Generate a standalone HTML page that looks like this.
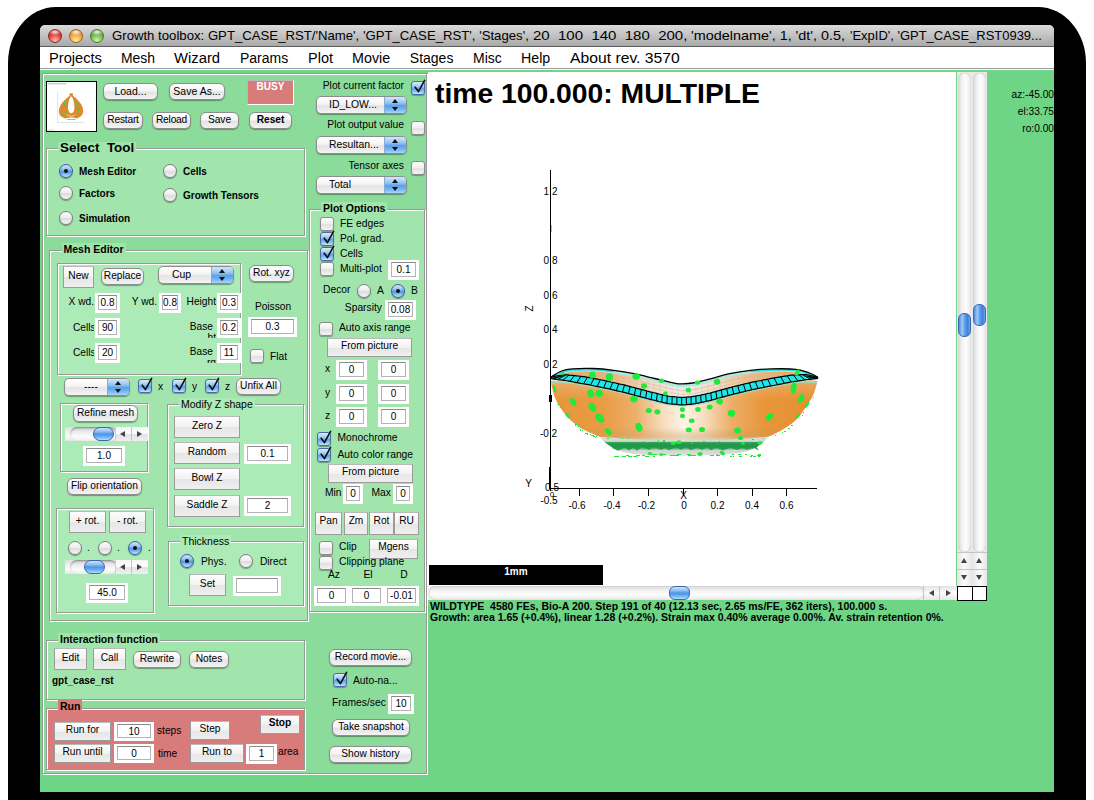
<!DOCTYPE html>
<html><head><meta charset="utf-8"><title>Growth toolbox</title>
<style>
html,body{margin:0;padding:0;background:#fff;}
body{width:1094px;height:800px;position:relative;overflow:hidden;font-family:"Liberation Sans",sans-serif;font-size:10px;color:#000;}
div,span{position:absolute;box-sizing:border-box;white-space:nowrap;}
#shadow{left:8px;top:7px;width:1078px;height:920px;background:#000;border-radius:48px / 56px;}
#win{left:40px;top:25px;width:1014px;height:767px;background:linear-gradient(#d6d6d6 0,#d6d6d6 10px,#6ed486 10px);overflow:hidden;border-radius:5px 5px 0 0;}
#title{left:0;top:0;width:1014px;height:22px;background:linear-gradient(#dadada,#c4c4c4 45%,#a9a9a9);border-bottom:1px solid #5e5e5e;border-radius:5px 5px 0 0;}
#menu{left:0;top:22px;width:1014px;height:22px;background:#fff;border-bottom:1px solid #9a9a9a;}
.tl{width:14px;height:14px;border-radius:7px;top:4px;}
.mi{top:2px;font-size:14px;line-height:18px;transform-origin:0 50%;}
/* everything below is positioned in page coords inside #ui (offset -40,-25) */
#ui{left:-40px;top:-25px;width:1094px;height:800px;}
.t{line-height:12px;font-size:10.2px;}
.b{font-weight:bold;font-size:10px;}
.r{text-align:right;}
.c{text-align:center;}
.panel{border:1px solid #989898;box-shadow:inset 1px 1px 0 #fff, 1px 1px 0 #fff;}
.btn{height:17px;border:1px solid #8d8d8d;border-radius:6px;background:linear-gradient(#ffffff,#f4f4f4 45%,#e4e4e4 55%,#f3f3f3);box-shadow:0 1px 1px rgba(0,0,0,.35);text-align:center;font-size:10.2px;line-height:14px;}
.sq{border:1px solid #9b9b9b;border-top-color:#b9b9b9;background:linear-gradient(#fdfdfd,#f2f2f2 50%,#e6e6e6 52%,#efefef);text-align:center;font-size:10.2px;line-height:14px;}
.ed{background:#fff;}
.ed i{position:absolute;left:3px;top:2px;right:3px;bottom:3px;border:1px solid #b3b3b3;border-top-color:#8a8a8a;font-style:normal;text-align:center;font-size:10px;overflow:hidden;display:flex;align-items:center;justify-content:center;line-height:10px;padding-top:1px;}
.cb{width:14px;height:14px;border:1px solid #8a8a8a;border-radius:3px;background:linear-gradient(#fff,#eee 50%,#e0e0e0 55%,#f4f4f4);box-shadow:0 1px 1px rgba(0,0,0,.3);}
.cb.on{border-color:#4a69a6;background:linear-gradient(#dcebfc,#9cc6f2 40%,#5fa2ea 55%,#86c0f6 78%,#c4e6fd);}
.cb.on svg{position:absolute;left:-1px;top:-5px;}
.rd{width:14px;height:14px;border:1px solid #7f7f7f;border-radius:8px;background:linear-gradient(#fdfdfd,#ececec 50%,#dcdcdc 55%,#f6f6f6);box-shadow:0 1px 1px rgba(0,0,0,.35);}
.rd.on{border-color:#3d5c9c;background:linear-gradient(#d6e6fa,#8fbdf0 40%,#4f97e6 55%,#7fbdf6 78%,#c4e8fe);}
.rd.on:after{content:"";position:absolute;left:4px;top:4px;width:4px;height:4px;border-radius:3px;background:#111;}
.pop{height:17px;border:1px solid #8d8d8d;border-radius:5px;background:linear-gradient(#ffffff,#f4f4f4 45%,#e4e4e4 55%,#f3f3f3);box-shadow:0 1px 1px rgba(0,0,0,.35);font-size:10.4px;line-height:15px;overflow:hidden;}
.pop b{position:absolute;right:0;top:0;width:21px;height:17px;background:linear-gradient(#d3e6fa,#97c3f1 35%,#5a9fea 52%,#79b9f4 75%,#b7defc);border-left:1px solid #86a9d8;}
.pop b:before{content:"";position:absolute;left:7px;top:2px;border:3px solid transparent;border-top:0;border-bottom:4px solid #111;}
.pop b:after{content:"";position:absolute;left:7px;top:10px;border:3px solid transparent;border-bottom:0;border-top:4px solid #111;}
</style></head><body>
<div id="shadow"></div>
<div id="win">
 <div id="title">
  <div class="tl" style="left:8px;background:radial-gradient(ellipse 55% 30% at 50% 16%,rgba(255,255,255,.9),rgba(255,255,255,0)),radial-gradient(circle at 50% 88%,#ffc0b8,#e63a32 55%,#a01a18);border:1px solid #8a2a26"></div>
  <div class="tl" style="left:29px;background:radial-gradient(ellipse 55% 30% at 50% 16%,rgba(255,255,255,.9),rgba(255,255,255,0)),radial-gradient(circle at 50% 88%,#fff0a0,#f2a038 55%,#c06a14);border:1px solid #98602a"></div>
  <div class="tl" style="left:50px;background:radial-gradient(ellipse 55% 30% at 50% 16%,rgba(255,255,255,.9),rgba(255,255,255,0)),radial-gradient(circle at 50% 88%,#d8f4a8,#6cb448 55%,#3a8224);border:1px solid #4a7a34"></div>
  <span style="left:72.4px;top:2px;font-size:13px;line-height:18px;transform-origin:0 50%;white-space:pre;transform:scaleX(1.0129);">Growth toolbox: GPT_CASE_RST/'Name', 'GPT_CASE_RST', 'Stages', </span><span style="left:492.9px;top:2px;font-size:13px;line-height:18px;transform-origin:0 50%;white-space:pre;transform:scaleX(1.1541);">20  100  140  180  200, </span><span style="left:651.4px;top:2px;font-size:13px;line-height:18px;transform-origin:0 50%;white-space:pre;transform:scaleX(1.1063);">'modelname', 1, 'dt', 0.5, </span><span style="left:809.5px;top:2px;font-size:13px;line-height:18px;transform-origin:0 50%;white-space:pre;transform:scaleX(0.9973);">'ExpID', 'GPT_CASE_RST0939...</span>
 </div>
 <div id="menu">
  <span class="mi" style="left:8.7px;transform:scaleX(1.046)">Projects</span><span class="mi" style="left:81.1px;transform:scaleX(0.996)">Mesh</span><span class="mi" style="left:134.0px;transform:scaleX(1.058)">Wizard</span><span class="mi" style="left:200.1px;transform:scaleX(0.999)">Params</span><span class="mi" style="left:267.9px;transform:scaleX(1.036)">Plot</span><span class="mi" style="left:312.1px;transform:scaleX(1.022)">Movie</span><span class="mi" style="left:369.8px;transform:scaleX(1.000)">Stages</span><span class="mi" style="left:433.1px;transform:scaleX(0.997)">Misc</span><span class="mi" style="left:480.8px;transform:scaleX(1.014)">Help</span><span class="mi" style="left:529.6px;transform:scaleX(1.122)">About rev. 3570</span>
 </div>
 <div id="ui"><div style="left:40px;top:69px;width:1014px;height:1px;background:#fff"></div>
 <div class="panel" style="left:42px;top:73px;width:385px;height:701px;background:#8bdb9b;"></div>
<div style="left:46px;top:81px;width:51px;height:51px;background:#fff;border:1px solid #000;"></div>
<svg style="position:absolute;left:0;top:0" width="110" height="140" viewBox="0 0 110 140"><path d="M57.6 92V122.5H84" stroke="#d9d9d9" stroke-width="0.7" fill="none"/><rect x="47.5" y="83" width="19" height="1.4" fill="#bdbdbd" opacity="0.8"/><rect x="47.5" y="129.6" width="7" height="0.8" fill="#cfcfcf"/><path d="M69.6 93.3 L73 93.3 L72.8 95.4 C76 98 83.4 104 83.2 111 C83 116 79 118.4 75.5 118 C73 117.8 71.8 117.6 71 117.6 C70 117.6 68.8 117.9 66.5 118 C62.5 118.3 58.8 116 58.9 111 C59 104 66.5 98 69.8 95.4Z" fill="#dc8a2c"/><path d="M71.2 96.3 C69 98.5 67.8 104 68 108 C68.2 111.5 69.6 113.2 71.2 113.2 C72.8 113.2 74.2 111.5 74.4 108 C74.6 104 73.4 98.5 71.2 96.3Z" fill="#fff"/><path d="M66 113.5 C68 116.5 74.4 116.5 76.4 113.5 C76 117.5 66.4 117.5 66 113.5Z" fill="#f6dcc0"/><path d="M63.6 118 C67 119.6 75.6 119.6 79 118 C76.5 120.4 66 120.4 63.6 118Z" fill="#2fb24f"/><g fill="#2fd84a"><circle cx="64.5" cy="102.5" r="0.9"/><circle cx="64.3" cy="105.4" r="0.9"/><circle cx="77.2" cy="103.5" r="1.2"/><circle cx="77.8" cy="107.3" r="1"/><circle cx="78.4" cy="110" r="0.9"/><circle cx="62.8" cy="115" r="0.9"/><circle cx="66" cy="112.4" r="0.8"/><circle cx="76" cy="115.6" r="0.9"/><circle cx="68" cy="99" r="0.6"/></g></svg>
<div class="btn" style="left:103px;top:82.5px;width:55px;height:17px;font-size:10.5px;">Load...</div>
<div class="btn" style="left:169px;top:82.5px;width:56px;height:17px;font-size:10.5px;">Save As...</div>
<div style="left:247px;top:80px;width:47px;height:25px;background:#d87b7b;border:1px solid #fff;border-top-color:#b9b9b9;border-left-color:#b9b9b9;"></div>
<span class="t b c" style="left:247px;top:81px;width:47px;color:#fff;">BUSY</span>
<div class="btn" style="left:103px;top:111.5px;width:40px;height:17px;letter-spacing:-0.2px;">Restart</div>
<div class="btn" style="left:152px;top:111.5px;width:39px;height:17px;letter-spacing:-0.2px;">Reload</div>
<div class="btn" style="left:200px;top:111.5px;width:39px;height:17px;">Save</div>
<div class="btn b" style="left:249px;top:111.5px;width:43px;height:17px;">Reset</div>
<div class="panel" style="left:46px;top:148px;width:259px;height:88px;background:#a1e5ad;"></div>
<span class="t b" style="left:58px;top:141.5px;background:#a1e5ad;padding:0 2px;font-size:13.4px;">Select&nbsp; Tool</span>
<div class="rd on" style="left:59px;top:164px"></div>
<span class="t b" style="left:79px;top:166px;">Mesh Editor</span>
<div class="rd" style="left:59px;top:186px"></div>
<span class="t b" style="left:79px;top:188px;">Factors</span>
<div class="rd" style="left:59px;top:211px"></div>
<span class="t b" style="left:79px;top:213px;">Simulation</span>
<div class="rd" style="left:163px;top:164px"></div>
<span class="t b" style="left:183px;top:166px;">Cells</span>
<div class="rd" style="left:163px;top:188px"></div>
<span class="t b" style="left:183px;top:190px;">Growth Tensors</span>
<div class="panel" style="left:49px;top:250px;width:259px;height:371px;background:#a1e5ad;"></div>
<span class="t b" style="left:61.5px;top:242.5px;background:#a1e5ad;padding:0 2px;font-size:10.5px;">Mesh Editor</span>
<div class="panel" style="left:57px;top:263px;width:184px;height:112px;background:#acebb8;"></div>
<div class="sq" style="left:63px;top:266px;width:31px;height:22px;line-height:17px;">New</div>
<div class="btn" style="left:101px;top:268px;width:43px;height:17px;">Replace</div>
<div class="pop" style="left:158px;top:266px;width:76px;height:18px;padding-left:13px">Cup<b></b></div>
<div class="btn" style="left:249px;top:265px;width:45px;height:17px;">Rot. xyz</div>
<span class="t r" style="left:58px;top:296px;width:36px;">X wd.</span>
<div class="ed" style="left:95px;top:293px;width:25px;height:20px"><i>0.8</i></div>
<span class="t r" style="left:124px;top:296px;width:33px;">Y wd.</span>
<div class="ed" style="left:159px;top:293px;width:22px;height:20px"><i>0.8</i></div>
<span class="t r" style="left:180px;top:296px;width:36px;overflow:hidden;">Height</span>
<div class="ed" style="left:217px;top:293px;width:24px;height:20px"><i>0.3</i></div>
<span class="t" style="left:73px;top:321.5px;width:21px;overflow:hidden;">Cells</span>
<div class="ed" style="left:95px;top:318px;width:25px;height:20px"><i>90</i></div>
<span class="t" style="left:73px;top:346.5px;width:21px;overflow:hidden;">Cells</span>
<div class="ed" style="left:95px;top:343px;width:25px;height:20px"><i>20</i></div>
<span class="t r" style="left:180px;top:321px;width:33px;">Base</span>
<span class="t r" style="left:180px;top:332px;width:36px;height:6px;overflow:hidden;">ht</span>
<div class="ed" style="left:217px;top:318px;width:24px;height:20px"><i>0.2</i></div>
<span class="t r" style="left:180px;top:346px;width:33px;">Base</span>
<span class="t r" style="left:180px;top:357px;width:36px;height:6px;overflow:hidden;">rg</span>
<div class="ed" style="left:217px;top:343px;width:24px;height:20px"><i>11</i></div>
<span class="t c" style="left:248px;top:300.5px;width:50px;">Poisson</span>
<div class="ed" style="left:248px;top:317px;width:49px;height:20px"><i>0.3</i></div>
<div class="cb" style="left:250px;top:349px"></div>
<span class="t" style="left:270px;top:351px;">Flat</span>
<div class="pop" style="left:64px;top:378px;width:66px;height:18px;padding-left:19px">----<b></b></div>
<div class="cb on" style="left:138px;top:379px"><svg width="18" height="18" viewBox="0 0 18 18"><path d="M4.2 10.2 L7.4 14.6 L13.6 3.4" fill="none" stroke="#111" stroke-width="1.65" stroke-linecap="round" stroke-linejoin="round"/></svg></div>
<span class="t" style="left:158px;top:381px;">x</span>
<div class="cb on" style="left:172px;top:379px"><svg width="18" height="18" viewBox="0 0 18 18"><path d="M4.2 10.2 L7.4 14.6 L13.6 3.4" fill="none" stroke="#111" stroke-width="1.65" stroke-linecap="round" stroke-linejoin="round"/></svg></div>
<span class="t" style="left:192px;top:381px;">y</span>
<div class="cb on" style="left:205px;top:379px"><svg width="18" height="18" viewBox="0 0 18 18"><path d="M4.2 10.2 L7.4 14.6 L13.6 3.4" fill="none" stroke="#111" stroke-width="1.65" stroke-linecap="round" stroke-linejoin="round"/></svg></div>
<span class="t" style="left:225px;top:381px;">z</span>
<div class="btn" style="left:236px;top:378px;width:45px;height:17px;">Unfix All</div>
<div class="panel" style="left:60px;top:403px;width:88px;height:69px;background:#acebb8;"></div>
<div class="btn" style="left:73px;top:405px;width:65px;height:17px;">Refine mesh</div>
<div class="ed" style="left:83px;top:446px;width:42px;height:20px"><i>1.0</i></div>
<div class="btn" style="left:67px;top:477.5px;width:75px;height:17px;">Flip orientation</div>
<div class="panel" style="left:56px;top:508px;width:98px;height:105px;background:#acebb8;"></div>
<div class="sq" style="left:69px;top:511px;width:37px;height:22px;line-height:17px;">+ rot.</div>
<div class="sq" style="left:109px;top:511px;width:37px;height:22px;line-height:17px;">- rot.</div>
<div class="rd" style="left:68px;top:540.5px"></div>
<span class="t" style="left:87px;top:541.5px;">.</span>
<div class="rd" style="left:98px;top:540.5px"></div>
<span class="t" style="left:117px;top:541.5px;">.</span>
<div class="rd on" style="left:128px;top:540.5px"></div>
<span class="t" style="left:148px;top:541.5px;">.</span>
<div class="ed" style="left:86px;top:583px;width:42px;height:20px"><i>45.0</i></div>
<div class="panel" style="left:167px;top:404px;width:137px;height:123px;background:#acebb8;"></div>
<span class="t" style="left:179px;top:397.5px;background:#acebb8;padding:0 2px;font-size:10.5px;">Modify Z shape</span>
<div class="sq" style="left:174px;top:416px;width:66px;height:22px;line-height:17px;">Zero Z</div>
<div class="sq" style="left:174px;top:442px;width:66px;height:22px;line-height:17px;">Random</div>
<div class="ed" style="left:244px;top:444px;width:47px;height:20px"><i>0.1</i></div>
<div class="sq" style="left:174px;top:468px;width:66px;height:22px;line-height:17px;">Bowl Z</div>
<div class="sq" style="left:174px;top:495px;width:66px;height:22px;line-height:17px;">Saddle Z</div>
<div class="ed" style="left:244px;top:496px;width:47px;height:20px"><i>2</i></div>
<div class="panel" style="left:168px;top:541px;width:136px;height:65px;background:#acebb8;"></div>
<span class="t" style="left:180px;top:534.5px;background:#acebb8;padding:0 2px;font-size:10.5px;">Thickness</span>
<div class="rd on" style="left:180px;top:554px"></div>
<span class="t" style="left:201px;top:556px;">Phys.</span>
<div class="rd" style="left:239px;top:554px"></div>
<span class="t" style="left:260px;top:556px;">Direct</span>
<div class="sq" style="left:189px;top:574px;width:37px;height:22px;line-height:17px;">Set</div>
<div class="ed" style="left:233px;top:576px;width:48px;height:20px"><i></i></div>
<div class="panel" style="left:46px;top:640px;width:259px;height:60px;background:#a1e5ad;"></div>
<span class="t b" style="left:58px;top:632.5px;background:#a1e5ad;padding:0 2px;font-size:10.5px;">Interaction function</span>
<div class="sq" style="left:54px;top:648px;width:33px;height:22px;line-height:17px;">Edit</div>
<div class="sq" style="left:93px;top:648px;width:33px;height:22px;line-height:17px;">Call</div>
<div class="btn" style="left:133px;top:651px;width:48px;height:17px;">Rewrite</div>
<div class="btn" style="left:189px;top:651px;width:40px;height:17px;">Notes</div>
<span class="t b" style="left:52px;top:675px;">gpt_case_rst</span>
<div class="panel" style="left:46px;top:708px;width:259px;height:62px;background:#d87b7b;"></div>
<span class="t b" style="left:58px;top:700px;background:#d87b7b;padding:0 2px;font-size:10.5px;">Run</span>
<div class="sq" style="left:54px;top:722px;width:57px;height:19px;line-height:14px;">Run for</div>
<div class="ed" style="left:114px;top:722px;width:40px;height:19px"><i>10</i></div>
<span class="t" style="left:157px;top:725px;">steps</span>
<div class="sq" style="left:54px;top:744px;width:57px;height:19px;line-height:14px;">Run until</div>
<div class="ed" style="left:114px;top:744px;width:40px;height:19px"><i>0</i></div>
<span class="t" style="left:158px;top:748px;">time</span>
<div class="sq" style="left:190px;top:721px;width:40px;height:19px;line-height:14px;">Step</div>
<div class="sq b" style="left:260px;top:715px;width:40px;height:19px;line-height:14px;">Stop</div>
<div class="sq" style="left:190px;top:744px;width:54px;height:19px;line-height:14px;">Run to</div>
<div class="ed" style="left:246px;top:744px;width:31px;height:20px"><i>1</i></div>
<span class="t" style="left:278px;top:746px;">area</span>
<div style="left:65px;top:427px;width:83px;height:14px;background:linear-gradient(#dcdcdc,#f3f3f3 40%,#fafafa 70%,#e4e4e4);"></div>
<div style="left:70px;top:427px;width:47px;height:14px;background:linear-gradient(#c9c9c9,#e9e9e9 30%,#fbfbfb 65%,#ededed);border-radius:7px;box-shadow:inset 0 1px 2px rgba(0,0,0,.35);"></div>
<div style="left:93px;top:427px;width:21px;height:14px;background:linear-gradient(#cfe4fb,#8fbff2 30%,#4d94e6 52%,#6db2f4 75%,#b9e0fd);border:1px solid #3a66b0;border-radius:7px;"></div>
<div style="left:115px;top:427px;width:16px;height:14px;background:linear-gradient(#f6f6f6,#fdfdfd 45%,#e2e2e2 55%,#f0f0f0);border-left:1px solid #d0d0d0;"></div>
<div style="left:131px;top:427px;width:17px;height:14px;background:linear-gradient(#f6f6f6,#fdfdfd 45%,#e2e2e2 55%,#f0f0f0);border-left:1px solid #c4c4c4;"></div>
<div style="left:120px;top:431px;width:0px;height:0px;border:3.2px solid transparent;border-left:0;border-right:5.5px solid #444;"></div>
<div style="left:137px;top:431px;width:0px;height:0px;border:3.2px solid transparent;border-right:0;border-left:5.5px solid #444;"></div>
<div style="left:65px;top:560px;width:83px;height:14px;background:linear-gradient(#dcdcdc,#f3f3f3 40%,#fafafa 70%,#e4e4e4);"></div>
<div style="left:70px;top:560px;width:47px;height:14px;background:linear-gradient(#c9c9c9,#e9e9e9 30%,#fbfbfb 65%,#ededed);border-radius:7px;box-shadow:inset 0 1px 2px rgba(0,0,0,.35);"></div>
<div style="left:84px;top:560px;width:21px;height:14px;background:linear-gradient(#cfe4fb,#8fbff2 30%,#4d94e6 52%,#6db2f4 75%,#b9e0fd);border:1px solid #3a66b0;border-radius:7px;"></div>
<div style="left:115px;top:560px;width:16px;height:14px;background:linear-gradient(#f6f6f6,#fdfdfd 45%,#e2e2e2 55%,#f0f0f0);border-left:1px solid #d0d0d0;"></div>
<div style="left:131px;top:560px;width:17px;height:14px;background:linear-gradient(#f6f6f6,#fdfdfd 45%,#e2e2e2 55%,#f0f0f0);border-left:1px solid #c4c4c4;"></div>
<div style="left:120px;top:564px;width:0px;height:0px;border:3.2px solid transparent;border-left:0;border-right:5.5px solid #444;"></div>
<div style="left:137px;top:564px;width:0px;height:0px;border:3.2px solid transparent;border-right:0;border-left:5.5px solid #444;"></div>
 <span class="t r" style="left:310px;top:80px;width:94px;font-size:10.3px;">Plot current factor</span>
<div class="cb on" style="left:411px;top:81px"><svg width="18" height="18" viewBox="0 0 18 18"><path d="M4.2 10.2 L7.4 14.6 L13.6 3.4" fill="none" stroke="#111" stroke-width="1.65" stroke-linecap="round" stroke-linejoin="round"/></svg></div>
<div class="pop" style="left:316px;top:96px;width:91px;height:18px;padding-left:12px">ID_LOW...<b></b></div>
<span class="t r" style="left:310px;top:119px;width:94px;font-size:10.3px;">Plot output value</span>
<div class="cb" style="left:411px;top:121px"></div>
<div class="pop" style="left:316px;top:135.5px;width:91px;height:18px;padding-left:12px">Resultan...<b></b></div>
<span class="t r" style="left:310px;top:159.5px;width:94px;font-size:10.3px;">Tensor axes</span>
<div class="cb" style="left:411px;top:161px"></div>
<div class="pop" style="left:316px;top:175.5px;width:91px;height:18px;padding-left:12px">Total<b></b></div>
<div class="panel" style="left:309px;top:209px;width:116px;height:403px;background:#a1e5ad;"></div>
<span class="t b" style="left:321px;top:201.5px;background:#a1e5ad;padding:0 2px;font-size:10.5px;">Plot Options</span>
<div class="cb" style="left:320px;top:217px"></div>
<span class="t" style="left:340px;top:217.5px;font-size:10.3px;">FE edges</span>
<div class="cb on" style="left:320px;top:232px"><svg width="18" height="18" viewBox="0 0 18 18"><path d="M4.2 10.2 L7.4 14.6 L13.6 3.4" fill="none" stroke="#111" stroke-width="1.65" stroke-linecap="round" stroke-linejoin="round"/></svg></div>
<span class="t" style="left:340px;top:233px;font-size:10.3px;">Pol. grad.</span>
<div class="cb on" style="left:320px;top:247px"><svg width="18" height="18" viewBox="0 0 18 18"><path d="M4.2 10.2 L7.4 14.6 L13.6 3.4" fill="none" stroke="#111" stroke-width="1.65" stroke-linecap="round" stroke-linejoin="round"/></svg></div>
<span class="t" style="left:340px;top:248px;font-size:10.3px;">Cells</span>
<div class="cb" style="left:320px;top:262px"></div>
<span class="t" style="left:340px;top:263px;font-size:10.3px;">Multi-plot</span>
<div class="ed" style="left:388px;top:260px;width:31px;height:20px"><i>0.1</i></div>
<span class="t" style="left:323px;top:284px;font-size:10.3px;">Decor</span>
<div class="rd" style="left:356.5px;top:284px"></div>
<span class="t" style="left:377px;top:285px;font-size:10.3px;">A</span>
<div class="rd on" style="left:391px;top:284px"></div>
<span class="t" style="left:411px;top:285px;font-size:10.3px;">B</span>
<span class="t r" style="left:330px;top:302px;width:52px;font-size:10.3px;">Sparsity</span>
<div class="ed" style="left:385px;top:300px;width:31px;height:20px"><i>0.08</i></div>
<div class="cb" style="left:319px;top:322px"></div>
<span class="t" style="left:339px;top:322px;font-size:10.3px;">Auto axis range</span>
<div class="sq" style="left:327px;top:338px;width:85px;height:19px;line-height:13px;">From picture</div>
<span class="t" style="left:325px;top:362.5px;font-size:10.3px;">x</span>
<div class="ed" style="left:336px;top:360px;width:31px;height:20px"><i>0</i></div>
<div class="ed" style="left:378px;top:360px;width:31px;height:20px"><i>0</i></div>
<span class="t" style="left:325px;top:386.5px;font-size:10.3px;">y</span>
<div class="ed" style="left:336px;top:384px;width:31px;height:20px"><i>0</i></div>
<div class="ed" style="left:378px;top:384px;width:31px;height:20px"><i>0</i></div>
<span class="t" style="left:325px;top:409.5px;font-size:10.3px;">z</span>
<div class="ed" style="left:336px;top:407px;width:31px;height:20px"><i>0</i></div>
<div class="ed" style="left:378px;top:407px;width:31px;height:20px"><i>0</i></div>
<div class="cb on" style="left:317px;top:431.5px"><svg width="18" height="18" viewBox="0 0 18 18"><path d="M4.2 10.2 L7.4 14.6 L13.6 3.4" fill="none" stroke="#111" stroke-width="1.65" stroke-linecap="round" stroke-linejoin="round"/></svg></div>
<span class="t" style="left:337.5px;top:432px;font-size:10.3px;">Monochrome</span>
<div class="cb on" style="left:317px;top:447.5px"><svg width="18" height="18" viewBox="0 0 18 18"><path d="M4.2 10.2 L7.4 14.6 L13.6 3.4" fill="none" stroke="#111" stroke-width="1.65" stroke-linecap="round" stroke-linejoin="round"/></svg></div>
<span class="t" style="left:337.5px;top:448.5px;font-size:10.3px;">Auto color range</span>
<div class="sq" style="left:328px;top:464px;width:85px;height:19px;line-height:13px;">From picture</div>
<span class="t" style="left:325px;top:486.5px;font-size:10.3px;">Min</span>
<div class="ed" style="left:343px;top:484px;width:20px;height:20px"><i>0</i></div>
<span class="t" style="left:371.5px;top:486.5px;font-size:10.3px;">Max</span>
<div class="ed" style="left:393px;top:484px;width:20px;height:20px"><i>0</i></div>
<div class="sq" style="left:315px;top:512px;width:27px;height:23px;line-height:15px;">Pan</div>
<div class="sq" style="left:344px;top:512px;width:24px;height:23px;line-height:15px;">Zm</div>
<div class="sq" style="left:369px;top:512px;width:25px;height:23px;line-height:15px;">Rot</div>
<div class="sq" style="left:394px;top:512px;width:25px;height:23px;line-height:15px;">RU</div>
<div class="cb" style="left:319px;top:541px"></div>
<span class="t" style="left:339px;top:541px;font-size:10.3px;">Clip</span>
<div class="sq" style="left:369px;top:539px;width:49px;height:20px;line-height:14px;">Mgens</div>
<div class="cb" style="left:319px;top:556px"></div>
<span class="t" style="left:339px;top:556px;font-size:10.3px;">Clipping plane</span>
<span class="t c" style="left:319px;top:569px;width:30px;font-size:10.3px;">Az</span>
<span class="t c" style="left:353px;top:569px;width:30px;font-size:10.3px;">El</span>
<span class="t c" style="left:389px;top:569px;width:30px;font-size:10.3px;">D</span>
<div class="ed" style="left:314px;top:586px;width:35px;height:20px"><i>0</i></div>
<div class="ed" style="left:349px;top:586px;width:35px;height:20px"><i>0</i></div>
<div class="ed" style="left:384px;top:586px;width:35px;height:20px"><i>-0.01</i></div>
<div class="btn" style="left:329px;top:649px;width:83px;height:17px;">Record movie...</div>
<div class="cb on" style="left:333px;top:673px"><svg width="18" height="18" viewBox="0 0 18 18"><path d="M4.2 10.2 L7.4 14.6 L13.6 3.4" fill="none" stroke="#111" stroke-width="1.65" stroke-linecap="round" stroke-linejoin="round"/></svg></div>
<span class="t" style="left:353px;top:675px;font-size:10.3px;">Auto-na...</span>
<span class="t" style="left:332px;top:697px;font-size:10.3px;">Frames/sec</span>
<div class="ed" style="left:388px;top:694px;width:26px;height:20px"><i>10</i></div>
<div class="btn" style="left:332px;top:719px;width:78px;height:17px;">Take snapshot</div>
<div class="btn" style="left:329px;top:746px;width:83px;height:17px;">Show history</div>
 <div style="left:428px;top:72px;width:528px;height:514px;background:#fff;"></div>
<span class="t b" style="left:435px;top:75.6px;font-size:28.3px;line-height:34px;">time 100.000: MULTIPLE</span>
<svg style="position:absolute;left:0;top:0" width="1094" height="800" viewBox="0 0 1094 800"><defs>
<radialGradient id="gb" gradientUnits="userSpaceOnUse" cx="683" cy="418" r="135" gradientTransform="translate(683 418) scale(1 0.42) translate(-683 -418)">
<stop offset="0" stop-color="#fff6e6"/><stop offset="0.25" stop-color="#f7d7ae"/><stop offset="0.6" stop-color="#eaa55a"/><stop offset="1" stop-color="#e08f30"/></radialGradient>
<linearGradient id="gbase" x1="0" y1="0" x2="0" y2="1"><stop offset="0" stop-color="#e9ece6"/><stop offset="0.35" stop-color="#cfd8cf"/><stop offset="0.5" stop-color="#1f9a46"/><stop offset="0.68" stop-color="#2fa552"/><stop offset="0.8" stop-color="#c9d2c9"/><stop offset="1" stop-color="#e4e7e2"/></linearGradient>
<linearGradient id="gin" x1="0" y1="0" x2="1" y2="0"><stop offset="0" stop-color="#e7a352"/><stop offset="0.35" stop-color="#f0d2ae"/><stop offset="0.5" stop-color="#eee6da"/><stop offset="0.65" stop-color="#f0d2ae"/><stop offset="1" stop-color="#e7a352"/></linearGradient>
</defs><defs>
<linearGradient id="gbody" gradientUnits="userSpaceOnUse" x1="550" y1="0" x2="818" y2="0">
<stop offset="0" stop-color="#e6953a"/><stop offset="0.2" stop-color="#e99c44"/><stop offset="0.32" stop-color="#ecb06c"/><stop offset="0.42" stop-color="#f6dcbc"/><stop offset="0.5" stop-color="#fdf4e6"/><stop offset="0.58" stop-color="#f6dcbc"/><stop offset="0.68" stop-color="#ecad66"/><stop offset="0.8" stop-color="#e8963a"/><stop offset="1" stop-color="#e48f32"/></linearGradient>
<linearGradient id="gshade" gradientUnits="userSpaceOnUse" x1="0" y1="378" x2="0" y2="440">
<stop offset="0" stop-color="#fff" stop-opacity="0.25"/><stop offset="0.35" stop-color="#fff" stop-opacity="0"/><stop offset="0.8" stop-color="#b98a4a" stop-opacity="0"/><stop offset="0.93" stop-color="#c89a5a" stop-opacity="0.35"/><stop offset="1" stop-color="#d9d2c0" stop-opacity="0.7"/></linearGradient>
<linearGradient id="gbase2" gradientUnits="userSpaceOnUse" x1="0" y1="436" x2="0" y2="456">
<stop offset="0" stop-color="#dfe3dc"/><stop offset="0.27" stop-color="#cdd8cf"/><stop offset="0.33" stop-color="#2a9f50"/><stop offset="0.52" stop-color="#1a9644"/><stop offset="0.62" stop-color="#58b174"/><stop offset="0.72" stop-color="#ccd6cd"/><stop offset="1" stop-color="#dfe3de"/></linearGradient>
<linearGradient id="gin2" gradientUnits="userSpaceOnUse" x1="550" y1="0" x2="818" y2="0">
<stop offset="0" stop-color="#e8a050"/><stop offset="0.22" stop-color="#ecb474"/><stop offset="0.38" stop-color="#f2dcc4"/><stop offset="0.5" stop-color="#f1ece4"/><stop offset="0.62" stop-color="#f2dcc4"/><stop offset="0.78" stop-color="#ecb474"/><stop offset="1" stop-color="#e8a050"/></linearGradient>
</defs><path d="M599.8 436.8C600.5 437.6 602.3 440.0 604.0 441.5C605.7 443.0 607.7 444.6 610.0 446.0C612.3 447.4 615.0 448.8 618.0 450.0C621.0 451.2 623.5 452.2 628.0 453.0C632.5 453.8 637.2 454.6 645.0 455.0C652.8 455.4 665.8 455.5 675.0 455.6C684.2 455.7 691.2 455.6 700.0 455.4C708.8 455.2 720.7 454.8 728.0 454.2C735.3 453.6 739.7 452.9 744.0 452.0C748.3 451.1 751.2 449.8 754.0 448.5C756.8 447.2 759.2 445.3 761.0 444.0C762.8 442.7 763.8 441.7 765.0 440.5C766.2 439.3 767.7 437.4 768.2 436.8Z" fill="url(#gbase2)"/><path d="M612 448L618 450.7L625 447.6L629 450.6L633 447.2L637 450.7L642 446.8L649 450.1L654 446.9L661 449.7L665 447.9L669 450.3L676 446.9L681 449.7L686 447.1L691 450.2L697 447.5L702 449.7L707 447.2L711 450.3L716 447.4L723 450.5L730 447.5L737 450.0L742 447.8L747 449.7L753 447.4L759 450.5L756 446 L612 446Z" fill="#1f9a48" opacity="0.9"/><path d="M550.5 380.6C551.3 383.6 552.8 392.7 555.3 398.4C557.8 404.1 561.6 410.0 565.6 414.8C569.6 419.6 573.6 423.5 579.3 427.2C585.0 430.9 596.4 435.2 599.8 436.8L599.8 436.8C606.5 437.2 626.1 438.9 640.0 439.5C653.9 440.1 668.0 440.2 683.0 440.2C698.0 440.2 715.8 440.1 730.0 439.5C744.2 438.9 761.8 437.2 768.2 436.8L768.2 436.8C770.5 435.7 777.4 432.8 782.0 430.0C786.6 427.2 791.8 424.0 795.7 420.3C799.6 416.6 802.3 412.3 805.3 408.0C808.3 403.7 811.5 398.9 813.5 394.3C815.5 389.7 816.9 382.9 817.6 380.6L817.6 381.0C815.5 380.9 809.6 380.2 805.3 380.3C801.0 380.4 797.3 380.9 791.6 381.7C785.9 382.5 777.9 384.1 771.0 385.4C764.1 386.7 757.3 388.0 750.4 389.5C743.5 391.0 736.6 392.7 729.8 394.5C722.9 396.3 715.5 398.7 709.3 400.2C703.1 401.7 697.3 402.9 692.8 403.6C688.2 404.3 686.1 404.5 682.0 404.4C677.9 404.3 674.1 404.2 668.4 403.2C662.7 402.2 654.6 399.9 647.8 398.2C640.9 396.4 634.1 394.4 627.3 392.7C620.4 391.0 613.6 389.4 606.7 387.9C599.8 386.4 593.0 385.0 586.1 383.8C579.2 382.6 571.5 381.3 565.6 380.8C559.8 380.3 553.4 381.0 551.0 381.0Z" fill="url(#gbody)"/><path d="M550.5 380.6C551.3 383.6 552.8 392.7 555.3 398.4C557.8 404.1 561.6 410.0 565.6 414.8C569.6 419.6 573.6 423.5 579.3 427.2C585.0 430.9 596.4 435.2 599.8 436.8L599.8 436.8C606.5 437.2 626.1 438.9 640.0 439.5C653.9 440.1 668.0 440.2 683.0 440.2C698.0 440.2 715.8 440.1 730.0 439.5C744.2 438.9 761.8 437.2 768.2 436.8L768.2 436.8C770.5 435.7 777.4 432.8 782.0 430.0C786.6 427.2 791.8 424.0 795.7 420.3C799.6 416.6 802.3 412.3 805.3 408.0C808.3 403.7 811.5 398.9 813.5 394.3C815.5 389.7 816.9 382.9 817.6 380.6L817.6 381.0C815.5 380.9 809.6 380.2 805.3 380.3C801.0 380.4 797.3 380.9 791.6 381.7C785.9 382.5 777.9 384.1 771.0 385.4C764.1 386.7 757.3 388.0 750.4 389.5C743.5 391.0 736.6 392.7 729.8 394.5C722.9 396.3 715.5 398.7 709.3 400.2C703.1 401.7 697.3 402.9 692.8 403.6C688.2 404.3 686.1 404.5 682.0 404.4C677.9 404.3 674.1 404.2 668.4 403.2C662.7 402.2 654.6 399.9 647.8 398.2C640.9 396.4 634.1 394.4 627.3 392.7C620.4 391.0 613.6 389.4 606.7 387.9C599.8 386.4 593.0 385.0 586.1 383.8C579.2 382.6 571.5 381.3 565.6 380.8C559.8 380.3 553.4 381.0 551.0 381.0Z" fill="url(#gshade)"/><path d="M551.0 377.0C552.8 376.0 557.9 372.4 561.5 371.0C565.1 369.6 567.1 369.3 572.4 368.9C577.6 368.5 586.1 368.3 593.0 368.5C599.9 368.7 606.8 369.4 613.6 370.3C620.5 371.2 627.2 372.3 634.1 373.7C641.0 375.1 647.8 376.9 654.7 378.5C661.6 380.1 670.6 382.4 675.3 383.3C680.0 384.2 680.1 383.9 683.0 383.8C685.9 383.8 688.4 383.8 692.8 383.0C697.2 382.2 703.1 380.8 709.3 379.2C715.5 377.6 722.9 375.2 729.8 373.7C736.6 372.2 743.5 371.1 750.4 370.3C757.3 369.5 763.5 369.1 771.0 368.9C778.5 368.7 789.3 368.6 795.7 369.3C802.1 370.0 805.8 371.7 809.4 373.0C813.0 374.3 816.2 376.4 817.6 377.1L817.6 377.8C815.5 377.7 809.6 377.0 805.3 377.1C801.0 377.2 797.3 377.6 791.6 378.5C785.9 379.4 777.9 380.9 771.0 382.2C764.1 383.5 757.3 384.8 750.4 386.3C743.5 387.8 736.6 389.5 729.8 391.3C722.9 393.1 715.5 395.5 709.3 397.0C703.1 398.5 697.3 399.7 692.8 400.4C688.2 401.1 686.1 401.3 682.0 401.2C677.9 401.1 674.1 401.0 668.4 400.0C662.7 399.0 654.6 396.8 647.8 395.0C640.9 393.2 634.1 391.2 627.3 389.5C620.4 387.8 613.6 386.2 606.7 384.7C599.8 383.2 593.0 381.8 586.1 380.6C579.2 379.4 571.5 378.1 565.6 377.6C559.8 377.1 553.4 377.8 551.0 377.8Z" fill="url(#gin2)"/><path d="M572.4 372.8C575.8 372.9 586.1 373.0 593.0 373.5C599.9 374.1 606.8 375.0 613.6 376.1C620.5 377.2 627.2 378.5 634.1 380.0C641.0 381.4 647.8 383.4 654.7 385.0C661.6 386.6 670.6 388.9 675.3 389.9C680.0 390.8 680.1 390.6 683.0 390.6C685.9 390.6 688.4 390.5 692.8 389.8C697.2 389.1 703.1 387.7 709.3 386.1C715.5 384.6 722.9 382.1 729.8 380.6C736.6 379.0 743.5 377.7 750.4 376.6C757.3 375.6 763.5 374.9 771.0 374.3C778.5 373.8 791.6 373.5 795.7 373.4" fill="none" stroke="#d8b5a8" stroke-width="0.8" opacity="0.8"/><path d="M572.4 373.7C575.8 374.0 586.1 374.7 593.0 375.6C599.9 376.4 606.8 377.6 613.6 378.9C620.5 380.2 627.2 381.6 634.1 383.2C641.0 384.8 647.8 386.8 654.7 388.5C661.6 390.2 670.6 392.4 675.3 393.4C680.0 394.4 680.1 394.4 683.0 394.4C685.9 394.4 688.4 394.3 692.8 393.6C697.2 392.9 703.1 391.6 709.3 390.1C715.5 388.5 722.9 386.1 729.8 384.4C736.6 382.8 743.5 381.2 750.4 380.0C757.3 378.7 763.5 377.7 771.0 376.8C778.5 375.8 791.6 374.8 795.7 374.4" fill="none" stroke="#d8b5a8" stroke-width="0.8" opacity="0.7"/><path d="M612 373.2V381.9M618 374.0V383.3M624 375.0V384.7M630 376.0V386.2M636 377.1V387.8M642 378.5V389.4M648 379.9V391.0M654 381.3V392.5M660 382.7V394.0M666 384.1V395.4M672 385.5V396.3M678 386.5V396.8M684 386.7V397.1M690 386.2V396.6M696 385.3V395.7M702 383.9V394.5M708 382.5V393.3M714 380.9V391.7M720 379.3V390.0M726 377.7V388.4M732 376.3V386.8M738 375.3V385.3M744 374.4V383.9M750 373.4V382.4" stroke="#d8b5a8" stroke-width="0.7" opacity="0.5" fill="none"/><path d="M551.0 378.8C552.8 377.8 557.9 374.2 561.5 372.8C565.1 371.4 567.1 371.1 572.4 370.7C577.6 370.3 586.1 370.1 593.0 370.3C599.9 370.5 606.8 371.2 613.6 372.1C620.5 373.0 627.2 374.1 634.1 375.5C641.0 376.9 647.8 378.7 654.7 380.3C661.6 381.9 670.6 384.2 675.3 385.1C680.0 386.0 680.1 385.7 683.0 385.6C685.9 385.6 688.4 385.6 692.8 384.8C697.2 384.0 703.1 382.6 709.3 381.0C715.5 379.4 722.9 377.0 729.8 375.5C736.6 374.0 743.5 372.9 750.4 372.1C757.3 371.3 763.5 370.9 771.0 370.7C778.5 370.5 789.3 370.4 795.7 371.1C802.1 371.8 805.8 373.5 809.4 374.8C813.0 376.1 816.2 378.2 817.6 378.9" fill="none" stroke="#a9ebe0" stroke-width="2.6"/><path d="M551.0 378.2C552.8 377.2 557.9 373.6 561.5 372.2C565.1 370.8 567.1 370.5 572.4 370.1C577.6 369.7 586.1 369.5 593.0 369.7C599.9 369.9 610.2 371.2 613.6 371.5" fill="none" stroke="#36dcd8" stroke-width="1.6"/><path d="M750.4 371.5C753.8 371.3 763.5 370.3 771.0 370.1C778.5 369.9 789.3 369.8 795.7 370.5C802.1 371.2 805.8 372.9 809.4 374.2C813.0 375.5 816.2 377.6 817.6 378.3" fill="none" stroke="#36dcd8" stroke-width="1.6"/><path d="M551.0 377.0C552.8 376.0 557.9 372.4 561.5 371.0C565.1 369.6 567.1 369.3 572.4 368.9C577.6 368.5 586.1 368.3 593.0 368.5C599.9 368.7 606.8 369.4 613.6 370.3C620.5 371.2 627.2 372.3 634.1 373.7C641.0 375.1 647.8 376.9 654.7 378.5C661.6 380.1 670.6 382.4 675.3 383.3C680.0 384.2 680.1 383.9 683.0 383.8C685.9 383.8 688.4 383.8 692.8 383.0C697.2 382.2 703.1 380.8 709.3 379.2C715.5 377.6 722.9 375.2 729.8 373.7C736.6 372.2 743.5 371.1 750.4 370.3C757.3 369.5 763.5 369.1 771.0 368.9C778.5 368.7 789.3 368.6 795.7 369.3C802.1 370.0 805.8 371.7 809.4 373.0C813.0 374.3 816.2 376.4 817.6 377.1" fill="none" stroke="#000" stroke-width="1.3"/><path d="M551.0 382.4C553.4 382.4 559.8 381.7 565.6 382.2C571.5 382.7 579.2 384.0 586.1 385.2C593.0 386.4 599.8 387.8 606.7 389.3C613.6 390.8 620.4 392.4 627.3 394.1C634.1 395.8 640.9 397.9 647.8 399.6C654.6 401.4 662.7 403.6 668.4 404.6C674.1 405.6 677.9 405.7 682.0 405.8C686.1 405.9 688.2 405.7 692.8 405.0C697.3 404.3 703.1 403.1 709.3 401.6C715.5 400.1 722.9 397.7 729.8 395.9C736.6 394.1 743.5 392.4 750.4 390.9C757.3 389.4 764.1 388.1 771.0 386.8C777.9 385.5 785.9 384.0 791.6 383.1C797.3 382.2 801.0 381.8 805.3 381.7C809.6 381.6 815.5 382.3 817.6 382.4" fill="none" stroke="#8fe6d2" stroke-width="2" opacity="0.75"/><clipPath id="bclip"><path d="M551.0 377.1C551.5 377.0 553.0 376.6 554.0 376.4C555.0 376.2 556.0 376.1 557.0 375.9C558.0 375.7 559.0 375.6 560.0 375.4C561.0 375.3 562.0 375.2 563.0 375.1C564.0 375.0 565.0 374.8 566.0 374.8C567.0 374.8 568.0 375.0 569.0 375.1C570.0 375.1 571.0 375.2 572.0 375.3C573.0 375.4 574.0 375.5 575.0 375.6C576.0 375.8 577.0 375.9 578.0 376.0C579.0 376.1 580.0 376.2 581.0 376.3C582.0 376.5 583.0 376.6 584.0 376.7C585.0 376.9 586.0 377.0 587.0 377.2C588.0 377.3 589.0 377.5 590.0 377.7C591.0 377.9 592.0 378.1 593.0 378.3C594.0 378.5 595.0 378.7 596.0 378.9C597.0 379.1 598.0 379.3 599.0 379.5C600.0 379.6 601.0 379.8 602.0 380.0C603.0 380.2 604.0 380.4 605.0 380.6C606.0 380.8 607.0 381.0 608.0 381.3C609.0 381.5 610.0 381.7 611.0 382.0C612.0 382.2 613.0 382.4 614.0 382.7C615.0 382.9 616.0 383.1 617.0 383.4C618.0 383.6 619.0 383.8 620.0 384.1C621.0 384.3 622.0 384.5 623.0 384.7C624.0 385.0 625.0 385.2 626.0 385.4C627.0 385.7 628.0 385.9 629.0 386.2C630.0 386.5 631.0 386.7 632.0 387.0C633.0 387.3 634.0 387.5 635.0 387.8C636.0 388.1 637.0 388.4 638.0 388.6C639.0 388.9 640.0 389.2 641.0 389.4C642.0 389.7 643.0 390.0 644.0 390.2C645.0 390.5 646.0 390.8 647.0 391.0C648.0 391.3 649.0 391.5 650.0 391.8C651.0 392.0 652.0 392.3 653.0 392.5C654.0 392.8 655.0 393.0 656.0 393.2C657.0 393.5 658.0 393.7 659.0 394.0C660.0 394.2 661.0 394.5 662.0 394.7C663.0 394.9 664.0 395.2 665.0 395.4C666.0 395.7 667.0 396.0 668.0 396.2C669.0 396.3 670.0 396.4 671.0 396.5C672.0 396.6 673.0 396.7 674.0 396.7C675.0 396.8 676.0 396.9 677.0 397.0C678.0 397.1 679.0 397.2 680.0 397.3C681.0 397.3 682.0 397.4 683.0 397.4C684.0 397.4 685.0 397.2 686.0 397.2C687.0 397.1 688.0 397.0 689.0 396.9C690.0 396.9 691.0 396.8 692.0 396.7C693.0 396.6 694.0 396.4 695.0 396.2C696.0 396.0 697.0 395.8 698.0 395.6C699.0 395.4 700.0 395.2 701.0 395.0C702.0 394.8 703.0 394.5 704.0 394.3C705.0 394.1 706.0 393.9 707.0 393.7C708.0 393.5 709.0 393.3 710.0 393.1C711.0 392.8 712.0 392.5 713.0 392.2C714.0 391.9 715.0 391.7 716.0 391.4C717.0 391.1 718.0 390.8 719.0 390.6C720.0 390.3 721.0 390.0 722.0 389.7C723.0 389.4 724.0 389.2 725.0 388.9C726.0 388.6 727.0 388.3 728.0 388.1C729.0 387.8 730.0 387.5 731.0 387.3C732.0 387.0 733.0 386.8 734.0 386.5C735.0 386.3 736.0 386.0 737.0 385.8C738.0 385.6 739.0 385.3 740.0 385.1C741.0 384.8 742.0 384.6 743.0 384.3C744.0 384.1 745.0 383.9 746.0 383.6C747.0 383.4 748.0 383.1 749.0 382.9C750.0 382.7 751.0 382.4 752.0 382.2C753.0 382.0 754.0 381.8 755.0 381.6C756.0 381.4 757.0 381.2 758.0 381.0C759.0 380.8 760.0 380.7 761.0 380.5C762.0 380.3 763.0 380.1 764.0 379.9C765.0 379.7 766.0 379.5 767.0 379.3C768.0 379.1 769.0 378.9 770.0 378.7C771.0 378.5 772.0 378.3 773.0 378.1C774.0 378.0 775.0 377.8 776.0 377.6C777.0 377.5 778.0 377.3 779.0 377.1C780.0 377.0 781.0 376.8 782.0 376.6C783.0 376.5 784.0 376.3 785.0 376.1C786.0 376.0 787.0 375.8 788.0 375.7C789.0 375.5 790.0 375.3 791.0 375.2C792.0 375.1 793.0 375.0 794.0 375.0C795.0 374.9 796.0 374.8 797.0 374.8C798.0 374.7 799.0 374.7 800.0 374.7C801.0 374.6 802.0 374.6 803.0 374.6C804.0 374.6 805.0 374.6 806.0 374.7C807.0 374.8 808.0 375.0 809.0 375.2C810.0 375.4 811.0 375.6 812.0 375.8C813.0 376.0 814.1 376.3 815.0 376.5C815.9 376.8 817.2 377.1 817.6 377.3L817.6 378.3C817.2 378.4 815.9 378.6 815.0 378.8C814.1 378.9 813.0 379.0 812.0 379.1C811.0 379.3 810.0 379.3 809.0 379.4C808.0 379.5 807.0 379.5 806.0 379.6C805.0 379.7 804.0 379.9 803.0 380.1C802.0 380.2 801.0 380.4 800.0 380.6C799.0 380.8 798.0 380.9 797.0 381.1C796.0 381.3 795.0 381.4 794.0 381.5C793.0 381.7 792.0 381.8 791.0 382.0C790.0 382.2 789.0 382.4 788.0 382.6C787.0 382.8 786.0 383.0 785.0 383.2C784.0 383.4 783.0 383.6 782.0 383.8C781.0 384.0 780.0 384.2 779.0 384.4C778.0 384.6 777.0 384.8 776.0 385.0C775.0 385.2 774.0 385.3 773.0 385.5C772.0 385.7 771.0 385.9 770.0 386.1C769.0 386.3 768.0 386.5 767.0 386.7C766.0 386.9 765.0 387.1 764.0 387.3C763.0 387.5 762.0 387.7 761.0 387.9C760.0 388.1 759.0 388.3 758.0 388.5C757.0 388.7 756.0 388.9 755.0 389.1C754.0 389.3 753.0 389.5 752.0 389.7C751.0 389.9 750.0 390.2 749.0 390.4C748.0 390.6 747.0 390.9 746.0 391.1C745.0 391.4 744.0 391.6 743.0 391.8C742.0 392.1 741.0 392.3 740.0 392.6C739.0 392.8 738.0 393.1 737.0 393.3C736.0 393.5 735.0 393.8 734.0 394.0C733.0 394.3 732.0 394.5 731.0 394.8C730.0 395.0 729.0 395.3 728.0 395.6C727.0 395.8 726.0 396.1 725.0 396.4C724.0 396.7 723.0 396.9 722.0 397.2C721.0 397.5 720.0 397.8 719.0 398.1C718.0 398.3 717.0 398.6 716.0 398.9C715.0 399.2 714.0 399.4 713.0 399.7C712.0 400.0 711.0 400.3 710.0 400.6C709.0 400.8 708.0 401.0 707.0 401.2C706.0 401.4 705.0 401.6 704.0 401.8C703.0 402.0 702.0 402.3 701.0 402.5C700.0 402.7 699.0 402.9 698.0 403.1C697.0 403.3 696.0 403.5 695.0 403.7C694.0 403.9 693.0 404.1 692.0 404.2C691.0 404.3 690.0 404.4 689.0 404.4C688.0 404.5 687.0 404.6 686.0 404.7C685.0 404.7 684.0 404.9 683.0 404.9C682.0 404.9 681.0 404.8 680.0 404.8C679.0 404.7 678.0 404.6 677.0 404.5C676.0 404.4 675.0 404.3 674.0 404.2C673.0 404.2 672.0 404.1 671.0 404.0C670.0 403.9 669.0 403.8 668.0 403.7C667.0 403.5 666.0 403.2 665.0 402.9C664.0 402.7 663.0 402.4 662.0 402.2C661.0 402.0 660.0 401.7 659.0 401.5C658.0 401.2 657.0 401.0 656.0 400.7C655.0 400.5 654.0 400.3 653.0 400.0C652.0 399.8 651.0 399.5 650.0 399.3C649.0 399.0 648.0 398.8 647.0 398.5C646.0 398.3 645.0 398.0 644.0 397.7C643.0 397.5 642.0 397.2 641.0 396.9C640.0 396.7 639.0 396.4 638.0 396.1C637.0 395.9 636.0 395.6 635.0 395.3C634.0 395.0 633.0 394.8 632.0 394.5C631.0 394.2 630.0 394.0 629.0 393.7C628.0 393.4 627.0 393.2 626.0 392.9C625.0 392.7 624.0 392.5 623.0 392.2C622.0 392.0 621.0 391.8 620.0 391.5C619.0 391.3 618.0 391.1 617.0 390.8C616.0 390.6 615.0 390.4 614.0 390.1C613.0 389.9 612.0 389.7 611.0 389.4C610.0 389.2 609.0 389.0 608.0 388.7C607.0 388.5 606.0 388.3 605.0 388.1C604.0 387.9 603.0 387.7 602.0 387.5C601.0 387.3 600.0 387.1 599.0 386.9C598.0 386.7 597.0 386.5 596.0 386.3C595.0 386.1 594.0 385.9 593.0 385.7C592.0 385.4 591.0 385.2 590.0 385.0C589.0 384.8 588.0 384.6 587.0 384.4C586.0 384.2 585.0 384.0 584.0 383.9C583.0 383.7 582.0 383.5 581.0 383.4C580.0 383.2 579.0 383.0 578.0 382.8C577.0 382.7 576.0 382.5 575.0 382.3C574.0 382.1 573.0 381.9 572.0 381.7C571.0 381.5 570.0 381.3 569.0 381.1C568.0 380.9 567.0 380.6 566.0 380.5C565.0 380.3 564.0 380.3 563.0 380.2C562.0 380.1 561.0 380.0 560.0 379.9C559.0 379.8 558.0 379.7 557.0 379.5C556.0 379.4 555.0 379.2 554.0 379.1C553.0 378.9 551.5 378.6 551.0 378.5Z"/></clipPath><path d="M551.0 377.1C551.5 377.0 553.0 376.6 554.0 376.4C555.0 376.2 556.0 376.1 557.0 375.9C558.0 375.7 559.0 375.6 560.0 375.4C561.0 375.3 562.0 375.2 563.0 375.1C564.0 375.0 565.0 374.8 566.0 374.8C567.0 374.8 568.0 375.0 569.0 375.1C570.0 375.1 571.0 375.2 572.0 375.3C573.0 375.4 574.0 375.5 575.0 375.6C576.0 375.8 577.0 375.9 578.0 376.0C579.0 376.1 580.0 376.2 581.0 376.3C582.0 376.5 583.0 376.6 584.0 376.7C585.0 376.9 586.0 377.0 587.0 377.2C588.0 377.3 589.0 377.5 590.0 377.7C591.0 377.9 592.0 378.1 593.0 378.3C594.0 378.5 595.0 378.7 596.0 378.9C597.0 379.1 598.0 379.3 599.0 379.5C600.0 379.6 601.0 379.8 602.0 380.0C603.0 380.2 604.0 380.4 605.0 380.6C606.0 380.8 607.0 381.0 608.0 381.3C609.0 381.5 610.0 381.7 611.0 382.0C612.0 382.2 613.0 382.4 614.0 382.7C615.0 382.9 616.0 383.1 617.0 383.4C618.0 383.6 619.0 383.8 620.0 384.1C621.0 384.3 622.0 384.5 623.0 384.7C624.0 385.0 625.0 385.2 626.0 385.4C627.0 385.7 628.0 385.9 629.0 386.2C630.0 386.5 631.0 386.7 632.0 387.0C633.0 387.3 634.0 387.5 635.0 387.8C636.0 388.1 637.0 388.4 638.0 388.6C639.0 388.9 640.0 389.2 641.0 389.4C642.0 389.7 643.0 390.0 644.0 390.2C645.0 390.5 646.0 390.8 647.0 391.0C648.0 391.3 649.0 391.5 650.0 391.8C651.0 392.0 652.0 392.3 653.0 392.5C654.0 392.8 655.0 393.0 656.0 393.2C657.0 393.5 658.0 393.7 659.0 394.0C660.0 394.2 661.0 394.5 662.0 394.7C663.0 394.9 664.0 395.2 665.0 395.4C666.0 395.7 667.0 396.0 668.0 396.2C669.0 396.3 670.0 396.4 671.0 396.5C672.0 396.6 673.0 396.7 674.0 396.7C675.0 396.8 676.0 396.9 677.0 397.0C678.0 397.1 679.0 397.2 680.0 397.3C681.0 397.3 682.0 397.4 683.0 397.4C684.0 397.4 685.0 397.2 686.0 397.2C687.0 397.1 688.0 397.0 689.0 396.9C690.0 396.9 691.0 396.8 692.0 396.7C693.0 396.6 694.0 396.4 695.0 396.2C696.0 396.0 697.0 395.8 698.0 395.6C699.0 395.4 700.0 395.2 701.0 395.0C702.0 394.8 703.0 394.5 704.0 394.3C705.0 394.1 706.0 393.9 707.0 393.7C708.0 393.5 709.0 393.3 710.0 393.1C711.0 392.8 712.0 392.5 713.0 392.2C714.0 391.9 715.0 391.7 716.0 391.4C717.0 391.1 718.0 390.8 719.0 390.6C720.0 390.3 721.0 390.0 722.0 389.7C723.0 389.4 724.0 389.2 725.0 388.9C726.0 388.6 727.0 388.3 728.0 388.1C729.0 387.8 730.0 387.5 731.0 387.3C732.0 387.0 733.0 386.8 734.0 386.5C735.0 386.3 736.0 386.0 737.0 385.8C738.0 385.6 739.0 385.3 740.0 385.1C741.0 384.8 742.0 384.6 743.0 384.3C744.0 384.1 745.0 383.9 746.0 383.6C747.0 383.4 748.0 383.1 749.0 382.9C750.0 382.7 751.0 382.4 752.0 382.2C753.0 382.0 754.0 381.8 755.0 381.6C756.0 381.4 757.0 381.2 758.0 381.0C759.0 380.8 760.0 380.7 761.0 380.5C762.0 380.3 763.0 380.1 764.0 379.9C765.0 379.7 766.0 379.5 767.0 379.3C768.0 379.1 769.0 378.9 770.0 378.7C771.0 378.5 772.0 378.3 773.0 378.1C774.0 378.0 775.0 377.8 776.0 377.6C777.0 377.5 778.0 377.3 779.0 377.1C780.0 377.0 781.0 376.8 782.0 376.6C783.0 376.5 784.0 376.3 785.0 376.1C786.0 376.0 787.0 375.8 788.0 375.7C789.0 375.5 790.0 375.3 791.0 375.2C792.0 375.1 793.0 375.0 794.0 375.0C795.0 374.9 796.0 374.8 797.0 374.8C798.0 374.7 799.0 374.7 800.0 374.7C801.0 374.6 802.0 374.6 803.0 374.6C804.0 374.6 805.0 374.6 806.0 374.7C807.0 374.8 808.0 375.0 809.0 375.2C810.0 375.4 811.0 375.6 812.0 375.8C813.0 376.0 814.1 376.3 815.0 376.5C815.9 376.8 817.2 377.1 817.6 377.3L817.6 378.3C817.2 378.4 815.9 378.6 815.0 378.8C814.1 378.9 813.0 379.0 812.0 379.1C811.0 379.3 810.0 379.3 809.0 379.4C808.0 379.5 807.0 379.5 806.0 379.6C805.0 379.7 804.0 379.9 803.0 380.1C802.0 380.2 801.0 380.4 800.0 380.6C799.0 380.8 798.0 380.9 797.0 381.1C796.0 381.3 795.0 381.4 794.0 381.5C793.0 381.7 792.0 381.8 791.0 382.0C790.0 382.2 789.0 382.4 788.0 382.6C787.0 382.8 786.0 383.0 785.0 383.2C784.0 383.4 783.0 383.6 782.0 383.8C781.0 384.0 780.0 384.2 779.0 384.4C778.0 384.6 777.0 384.8 776.0 385.0C775.0 385.2 774.0 385.3 773.0 385.5C772.0 385.7 771.0 385.9 770.0 386.1C769.0 386.3 768.0 386.5 767.0 386.7C766.0 386.9 765.0 387.1 764.0 387.3C763.0 387.5 762.0 387.7 761.0 387.9C760.0 388.1 759.0 388.3 758.0 388.5C757.0 388.7 756.0 388.9 755.0 389.1C754.0 389.3 753.0 389.5 752.0 389.7C751.0 389.9 750.0 390.2 749.0 390.4C748.0 390.6 747.0 390.9 746.0 391.1C745.0 391.4 744.0 391.6 743.0 391.8C742.0 392.1 741.0 392.3 740.0 392.6C739.0 392.8 738.0 393.1 737.0 393.3C736.0 393.5 735.0 393.8 734.0 394.0C733.0 394.3 732.0 394.5 731.0 394.8C730.0 395.0 729.0 395.3 728.0 395.6C727.0 395.8 726.0 396.1 725.0 396.4C724.0 396.7 723.0 396.9 722.0 397.2C721.0 397.5 720.0 397.8 719.0 398.1C718.0 398.3 717.0 398.6 716.0 398.9C715.0 399.2 714.0 399.4 713.0 399.7C712.0 400.0 711.0 400.3 710.0 400.6C709.0 400.8 708.0 401.0 707.0 401.2C706.0 401.4 705.0 401.6 704.0 401.8C703.0 402.0 702.0 402.3 701.0 402.5C700.0 402.7 699.0 402.9 698.0 403.1C697.0 403.3 696.0 403.5 695.0 403.7C694.0 403.9 693.0 404.1 692.0 404.2C691.0 404.3 690.0 404.4 689.0 404.4C688.0 404.5 687.0 404.6 686.0 404.7C685.0 404.7 684.0 404.9 683.0 404.9C682.0 404.9 681.0 404.8 680.0 404.8C679.0 404.7 678.0 404.6 677.0 404.5C676.0 404.4 675.0 404.3 674.0 404.2C673.0 404.2 672.0 404.1 671.0 404.0C670.0 403.9 669.0 403.8 668.0 403.7C667.0 403.5 666.0 403.2 665.0 402.9C664.0 402.7 663.0 402.4 662.0 402.2C661.0 402.0 660.0 401.7 659.0 401.5C658.0 401.2 657.0 401.0 656.0 400.7C655.0 400.5 654.0 400.3 653.0 400.0C652.0 399.8 651.0 399.5 650.0 399.3C649.0 399.0 648.0 398.8 647.0 398.5C646.0 398.3 645.0 398.0 644.0 397.7C643.0 397.5 642.0 397.2 641.0 396.9C640.0 396.7 639.0 396.4 638.0 396.1C637.0 395.9 636.0 395.6 635.0 395.3C634.0 395.0 633.0 394.8 632.0 394.5C631.0 394.2 630.0 394.0 629.0 393.7C628.0 393.4 627.0 393.2 626.0 392.9C625.0 392.7 624.0 392.5 623.0 392.2C622.0 392.0 621.0 391.8 620.0 391.5C619.0 391.3 618.0 391.1 617.0 390.8C616.0 390.6 615.0 390.4 614.0 390.1C613.0 389.9 612.0 389.7 611.0 389.4C610.0 389.2 609.0 389.0 608.0 388.7C607.0 388.5 606.0 388.3 605.0 388.1C604.0 387.9 603.0 387.7 602.0 387.5C601.0 387.3 600.0 387.1 599.0 386.9C598.0 386.7 597.0 386.5 596.0 386.3C595.0 386.1 594.0 385.9 593.0 385.7C592.0 385.4 591.0 385.2 590.0 385.0C589.0 384.8 588.0 384.6 587.0 384.4C586.0 384.2 585.0 384.0 584.0 383.9C583.0 383.7 582.0 383.5 581.0 383.4C580.0 383.2 579.0 383.0 578.0 382.8C577.0 382.7 576.0 382.5 575.0 382.3C574.0 382.1 573.0 381.9 572.0 381.7C571.0 381.5 570.0 381.3 569.0 381.1C568.0 380.9 567.0 380.6 566.0 380.5C565.0 380.3 564.0 380.3 563.0 380.2C562.0 380.1 561.0 380.0 560.0 379.9C559.0 379.8 558.0 379.7 557.0 379.5C556.0 379.4 555.0 379.2 554.0 379.1C553.0 378.9 551.5 378.6 551.0 378.5Z" fill="#1fe6e6" stroke="#000" stroke-width="1.25" stroke-linejoin="round"/><path d="M681.7 397.4L681.6 404.9M677.0 397.0L676.8 404.5M672.2 396.6L671.9 404.1M667.3 395.9L666.9 403.4M662.4 394.7L661.7 402.2M657.3 393.5L656.4 401.0M652.1 392.2L651.1 399.7M646.8 390.8L645.6 398.3M641.4 389.3L639.9 396.8M635.9 387.8L634.2 395.3M630.3 386.3L628.3 393.8M624.6 384.9L622.3 392.4M618.8 383.5L616.2 391.0M612.8 382.0L609.9 389.5M606.7 380.6L603.5 388.1M600.5 379.4L597.0 386.8M594.1 378.1L590.3 385.5M587.6 376.9L583.4 384.1M581.1 376.1L576.5 383.0M574.6 375.3L569.7 381.8M569.2 374.8L562.6 380.5M565.3 375.3L556.7 380.0M562.3 375.9L552.1 379.6M560.1 376.4L548.5 379.1M686.3 397.1L686.4 404.6M691.0 396.8L691.2 404.3M695.8 396.0L696.1 403.5M700.7 395.0L701.1 402.5M705.6 393.9L706.3 401.4M710.7 392.7L711.6 400.2M715.9 391.3L716.9 398.8M721.2 389.8L722.4 397.3M726.6 388.2L728.1 395.7M732.1 386.8L733.8 394.3M737.7 385.4L739.7 392.9M743.4 384.0L745.7 391.5M749.2 382.5L751.8 390.0M755.2 381.3L758.1 388.8M761.3 380.1L764.5 387.5M767.5 378.8L771.0 386.3M773.9 377.7L777.7 385.0M780.4 376.5L784.6 383.7M786.9 375.5L791.5 382.4M793.4 374.9L798.3 381.3M798.8 374.6L805.4 380.2M802.7 374.8L811.3 379.5M805.7 375.6L815.9 379.3M807.9 376.2L819.5 378.9M809.7 376.8L822.3 378.6" stroke="#000" stroke-width="1.0" fill="none" clip-path="url(#bclip)"/><ellipse cx="592.3" cy="375.1" rx="3.4" ry="3.4" fill="#1fea3c" transform="rotate(0 592.3 375.1)"/><ellipse cx="609.4" cy="377.1" rx="3.6" ry="3.8" fill="#1fea3c" transform="rotate(0 609.4 377.1)"/><ellipse cx="636.2" cy="376.5" rx="3.8" ry="3.2" fill="#1fea3c" transform="rotate(0 636.2 376.5)"/><ellipse cx="644" cy="386" rx="3" ry="2.8" fill="#1fea3c" transform="rotate(0 644 386)"/><ellipse cx="661.5" cy="380.8" rx="2.6" ry="2.2" fill="#1fea3c" transform="rotate(0 661.5 380.8)"/><ellipse cx="688.3" cy="390.2" rx="2.6" ry="2.4" fill="#1fea3c" transform="rotate(0 688.3 390.2)"/><ellipse cx="665.4" cy="393.6" rx="2.4" ry="2" fill="#1fea3c" transform="rotate(0 665.4 393.6)"/><ellipse cx="590.7" cy="393.6" rx="3.6" ry="4" fill="#1fea3c" transform="rotate(-20 590.7 393.6)"/><ellipse cx="599.2" cy="393.3" rx="3.8" ry="3.6" fill="#1fea3c" transform="rotate(0 599.2 393.3)"/><ellipse cx="573.1" cy="401.8" rx="2.8" ry="4.2" fill="#1fea3c" transform="rotate(-30 573.1 401.8)"/><ellipse cx="592.3" cy="407.3" rx="3.4" ry="4.6" fill="#1fea3c" transform="rotate(-35 592.3 407.3)"/><ellipse cx="599.8" cy="418.3" rx="3.6" ry="5.4" fill="#1fea3c" transform="rotate(-45 599.8 418.3)"/><ellipse cx="608.3" cy="431.6" rx="2.6" ry="4" fill="#1fea3c" transform="rotate(-50 608.3 431.6)"/><ellipse cx="633.9" cy="399.1" rx="3.8" ry="3.4" fill="#1fea3c" transform="rotate(0 633.9 399.1)"/><ellipse cx="648.8" cy="410.5" rx="3" ry="2.6" fill="#1fea3c" transform="rotate(0 648.8 410.5)"/><ellipse cx="657.4" cy="411.8" rx="3" ry="2.6" fill="#1fea3c" transform="rotate(0 657.4 411.8)"/><ellipse cx="638.9" cy="427.2" rx="3.4" ry="4.6" fill="#1fea3c" transform="rotate(-20 638.9 427.2)"/><ellipse cx="682.4" cy="409.6" rx="2.6" ry="2.4" fill="#1fea3c" transform="rotate(0 682.4 409.6)"/><ellipse cx="682.5" cy="415.9" rx="2.6" ry="2.2" fill="#1fea3c" transform="rotate(0 682.5 415.9)"/><ellipse cx="691.7" cy="420.8" rx="2.8" ry="2.2" fill="#1fea3c" transform="rotate(0 691.7 420.8)"/><ellipse cx="688.8" cy="429.9" rx="3" ry="2.4" fill="#1fea3c" transform="rotate(0 688.8 429.9)"/><ellipse cx="702" cy="429.5" rx="3" ry="2.6" fill="#1fea3c" transform="rotate(0 702 429.5)"/><ellipse cx="673.2" cy="443.2" rx="2.6" ry="1.8" fill="#1fea3c" transform="rotate(0 673.2 443.2)"/><ellipse cx="679.1" cy="442.3" rx="2.4" ry="1.8" fill="#1fea3c" transform="rotate(0 679.1 442.3)"/><ellipse cx="649.9" cy="453.5" rx="2.2" ry="1.6" fill="#1fea3c" transform="rotate(0 649.9 453.5)"/><ellipse cx="661.3" cy="454.6" rx="2.2" ry="1.4" fill="#1fea3c" transform="rotate(0 661.3 454.6)"/><ellipse cx="562.8" cy="373.3" rx="1.6" ry="1.6" fill="#1fea3c" transform="rotate(0 562.8 373.3)"/><ellipse cx="554.6" cy="388.8" rx="1.4" ry="4" fill="#1fea3c" transform="rotate(-15 554.6 388.8)"/><ellipse cx="567.6" cy="415.5" rx="1.4" ry="3.6" fill="#1fea3c" transform="rotate(-40 567.6 415.5)"/><ellipse cx="697.6" cy="382.6" rx="2.8" ry="2.2" fill="#1fea3c" transform="rotate(0 697.6 382.6)"/><ellipse cx="717.1" cy="381.7" rx="3.2" ry="3" fill="#1fea3c" transform="rotate(0 717.1 381.7)"/><ellipse cx="719.6" cy="401.5" rx="3.4" ry="3" fill="#1fea3c" transform="rotate(20 719.6 401.5)"/><ellipse cx="709.7" cy="407" rx="3" ry="2.6" fill="#1fea3c" transform="rotate(0 709.7 407)"/><ellipse cx="698" cy="409.4" rx="2.8" ry="2.4" fill="#1fea3c" transform="rotate(0 698 409.4)"/><ellipse cx="731.5" cy="413.2" rx="3.8" ry="3.4" fill="#1fea3c" transform="rotate(20 731.5 413.2)"/><ellipse cx="737.5" cy="430.6" rx="3.4" ry="3" fill="#1fea3c" transform="rotate(0 737.5 430.6)"/><ellipse cx="740.5" cy="437.9" rx="2.6" ry="2.2" fill="#1fea3c" transform="rotate(0 740.5 437.9)"/><ellipse cx="769.6" cy="416.9" rx="3" ry="4.4" fill="#1fea3c" transform="rotate(40 769.6 416.9)"/><ellipse cx="801.2" cy="398.4" rx="2.6" ry="4.8" fill="#1fea3c" transform="rotate(30 801.2 398.4)"/><ellipse cx="793.6" cy="388.1" rx="3" ry="6" fill="#1fea3c" transform="rotate(10 793.6 388.1)"/><ellipse cx="797.3" cy="372.6" rx="2" ry="3.2" fill="#1fea3c" transform="rotate(20 797.3 372.6)"/><ellipse cx="678.8" cy="442.3" rx="2.6" ry="1.8" fill="#1fea3c" transform="rotate(0 678.8 442.3)"/><ellipse cx="700" cy="453.9" rx="2.6" ry="2" fill="#1fea3c" transform="rotate(0 700 453.9)"/><ellipse cx="722.3" cy="453" rx="2.8" ry="2" fill="#1fea3c" transform="rotate(30 722.3 453)"/><ellipse cx="743.1" cy="443.4" rx="1.8" ry="1.4" fill="#1fea3c" transform="rotate(0 743.1 443.4)"/><ellipse cx="760" cy="443" rx="2.4" ry="1.8" fill="#1fea3c" transform="rotate(0 760 443)"/><ellipse cx="807" cy="405" rx="1.2" ry="3.4" fill="#1fea3c" transform="rotate(35 807 405)"/><ellipse cx="798" cy="416" rx="1.2" ry="3" fill="#1fea3c" transform="rotate(45 798 416)"/><rect x="628" y="438" width="1" height="1" fill="#1fea3c"/><rect x="596" y="436" width="1" height="1" fill="#1fea3c"/><rect x="663" y="440" width="2" height="1" fill="#1fea3c"/><rect x="703" y="441" width="2" height="1" fill="#1fea3c"/><rect x="578" y="426" width="2" height="1" fill="#1fea3c"/><rect x="813" y="397" width="1" height="1" fill="#1fea3c"/><rect x="741" y="439" width="1" height="1" fill="#1fea3c"/><rect x="657" y="441" width="1" height="1" fill="#1fea3c"/><rect x="784" y="431" width="2" height="1" fill="#1fea3c"/><rect x="647" y="442" width="1" height="1" fill="#1fea3c"/><rect x="575" y="424" width="2" height="1" fill="#1fea3c"/><rect x="554" y="395" width="1" height="1" fill="#1fea3c"/><rect x="586" y="433" width="2" height="1" fill="#1fea3c"/><rect x="673" y="443" width="2" height="1" fill="#1fea3c"/><rect x="571" y="420" width="1" height="1" fill="#1fea3c"/><rect x="582" y="430" width="1" height="1" fill="#1fea3c"/><rect x="553" y="391" width="1" height="1" fill="#1fea3c"/><rect x="802" y="415" width="1" height="1" fill="#1fea3c"/><rect x="782" y="432" width="1" height="1" fill="#1fea3c"/><rect x="719" y="441" width="1" height="1" fill="#1fea3c"/><rect x="585" y="433" width="1" height="1" fill="#1fea3c"/><rect x="591" y="435" width="2" height="1" fill="#1fea3c"/><rect x="622" y="438" width="1" height="1" fill="#1fea3c"/><rect x="607" y="438" width="2" height="1" fill="#1fea3c"/><rect x="691" y="443" width="2" height="1" fill="#1fea3c"/><rect x="775" y="435" width="1" height="1" fill="#1fea3c"/><rect x="658" y="440" width="1" height="1" fill="#1fea3c"/><rect x="560" y="407" width="1" height="1" fill="#1fea3c"/><rect x="643" y="441" width="1" height="1" fill="#1fea3c"/><rect x="803" y="412" width="1" height="1" fill="#1fea3c"/><rect x="580" y="429" width="1" height="1" fill="#1fea3c"/><rect x="789" y="428" width="1" height="1" fill="#1fea3c"/><rect x="791" y="425" width="2" height="1" fill="#1fea3c"/><rect x="575" y="425" width="1" height="1" fill="#1fea3c"/><rect x="763" y="438" width="1" height="1" fill="#1fea3c"/><rect x="595" y="437" width="1" height="1" fill="#1fea3c"/><rect x="593" y="436" width="2" height="1" fill="#1fea3c"/><rect x="591" y="435" width="1" height="1" fill="#1fea3c"/><rect x="557" y="404" width="2" height="1" fill="#1fea3c"/><rect x="580" y="430" width="1" height="1" fill="#1fea3c"/><rect x="667" y="442" width="1" height="1" fill="#1fea3c"/><rect x="560" y="407" width="2" height="1" fill="#1fea3c"/><rect x="587" y="434" width="1" height="1" fill="#1fea3c"/><rect x="788" y="428" width="2" height="1" fill="#1fea3c"/><rect x="663" y="441" width="2" height="1" fill="#1fea3c"/><rect x="593" y="435" width="1" height="1" fill="#1fea3c"/><rect x="590" y="434" width="1" height="1" fill="#1fea3c"/><rect x="752" y="439" width="2" height="1" fill="#1fea3c"/><rect x="758" y="456" width="2" height="1" fill="#1fea3c"/><rect x="716" y="455" width="4" height="1" fill="#1fea3c"/><rect x="688" y="455" width="3" height="1" fill="#1fea3c"/><rect x="750" y="456" width="2" height="1" fill="#1fea3c"/><rect x="738" y="454" width="1" height="1" fill="#1fea3c"/><rect x="671" y="455" width="2" height="1" fill="#1fea3c"/><rect x="676" y="455" width="3" height="1" fill="#1fea3c"/><rect x="730" y="456" width="2" height="1" fill="#1fea3c"/><rect x="753" y="456" width="3" height="1" fill="#1fea3c"/><rect x="633" y="456" width="4" height="1" fill="#1fea3c"/><rect x="645" y="456" width="4" height="1" fill="#1fea3c"/><rect x="745" y="454" width="2" height="1" fill="#1fea3c"/><rect x="636" y="455" width="4" height="1" fill="#1fea3c"/><rect x="663" y="454" width="3" height="1" fill="#1fea3c"/><rect x="626" y="455" width="3" height="1" fill="#1fea3c"/><rect x="695" y="455" width="1" height="1" fill="#1fea3c"/><rect x="670" y="455" width="3" height="1" fill="#1fea3c"/><rect x="689" y="454" width="2" height="1" fill="#1fea3c"/><rect x="758" y="454" width="3" height="1" fill="#1fea3c"/><rect x="653" y="456" width="2" height="1" fill="#1fea3c"/><rect x="653" y="454" width="4" height="1" fill="#1fea3c"/><rect x="739" y="456" width="3" height="1" fill="#1fea3c"/><rect x="673" y="455" width="4" height="1" fill="#1fea3c"/><rect x="717" y="454" width="1" height="1" fill="#1fea3c"/><rect x="732" y="454" width="1" height="1" fill="#1fea3c"/><rect x="652" y="454" width="1" height="1" fill="#1fea3c"/><rect x="732" y="454" width="2" height="1" fill="#1fea3c"/><rect x="622" y="456" width="4" height="1" fill="#1fea3c"/><rect x="614" y="456" width="4" height="1" fill="#1fea3c"/><rect x="751" y="455" width="2" height="1" fill="#1fea3c"/><rect x="618" y="456" width="1" height="1" fill="#1fea3c"/><rect x="757" y="455" width="2" height="1" fill="#1fea3c"/><rect x="642" y="455" width="3" height="1" fill="#1fea3c"/><rect x="692" y="455" width="4" height="1" fill="#1fea3c"/><rect x="687" y="454" width="3" height="1" fill="#1fea3c"/><rect x="733" y="456" width="1" height="1" fill="#1fea3c"/><rect x="614" y="456" width="2" height="1" fill="#1fea3c"/><rect x="689" y="455" width="4" height="1" fill="#1fea3c"/><rect x="628" y="456" width="4" height="1" fill="#1fea3c"/><rect x="710" y="455" width="4" height="1" fill="#1fea3c"/><rect x="758" y="455" width="2" height="1" fill="#1fea3c"/><rect x="759" y="455" width="2" height="1" fill="#1fea3c"/><rect x="673" y="455" width="1" height="1" fill="#1fea3c"/><rect x="738" y="454" width="3" height="1" fill="#1fea3c"/><rect x="677" y="454" width="4" height="1" fill="#1fea3c"/><g shape-rendering="crispEdges" stroke="#000" stroke-width="1" fill="none"><path d="M550.5 170V491"/><path d="M550 488.5H817"/><path d="M579 489V496M613.5 489V496M648 489V496M683.5 489V496M717.5 489V496M752 489V496M786.5 489V496"/></g><g font-family="Liberation Sans, sans-serif" font-size="10" fill="#000" text-anchor="middle"><text x="550.5" y="195">1&#160;2</text><text x="550.5" y="264">0&#160;8</text><text x="550.5" y="298.5">0&#160;6</text><text x="550.5" y="333">0&#160;4</text><text x="550.5" y="367.5">0&#160;2</text><text x="548.5" y="437">-0&#160;2</text><text x="551" y="230" font-size="7">|</text><rect x="549" y="395" width="3" height="7" fill="#000"/><rect x="549" y="467" width="2" height="22" fill="#000"/><text x="577" y="509">-0.6</text><text x="612" y="509">-0.4</text><text x="646.5" y="509">-0.2</text><text x="684" y="509">0</text><text x="717.5" y="509">0.2</text><text x="752" y="509">0.4</text><text x="786.5" y="509">0.6</text><text x="549" y="504">-0.5</text><text x="552" y="491">0.5</text><text x="552" y="497" font-size="8">0</text><text x="683.5" y="499">X</text><text x="528.5" y="487">Y</text><text x="529" y="312" transform="rotate(-90 529 308.5)">Z</text></g></svg>
<div style="left:429px;top:565px;width:174px;height:20px;background:#000;"></div>
<span class="t b c" style="left:429px;top:566px;width:174px;color:#fff;">1mm</span>
<div style="left:957px;top:72px;width:15px;height:514px;background:#e9e9e9;"></div>
<div style="left:958px;top:73px;width:13px;height:479px;background:linear-gradient(90deg,#d9d9d9,#f4f4f4 35%,#fdfdfd 60%,#e9e9e9);border-radius:7px;box-shadow:inset 0 0 1px #999;"></div>
<div style="left:958px;top:313px;width:13px;height:24px;background:linear-gradient(90deg,#4f8fe0,#9cc8f5 30%,#5a9ae8 55%,#3f80da 80%,#6aa8ee);border:1px solid #3a66b0;border-radius:6px;"></div>
<div style="left:957px;top:552px;width:15px;height:17px;background:linear-gradient(90deg,#e4e4e4,#fbfbfb 50%,#e6e6e6);border-top:1px solid #c4c4c4;"></div>
<div style="left:957px;top:569px;width:15px;height:17px;background:linear-gradient(90deg,#e4e4e4,#fbfbfb 50%,#e6e6e6);border-top:1px solid #c4c4c4;"></div>
<div style="left:961px;top:558px;width:0px;height:0px;border:3.5px solid transparent;border-top:0;border-bottom:5px solid #444;"></div>
<div style="left:961px;top:575px;width:0px;height:0px;border:3.5px solid transparent;border-bottom:0;border-top:5px solid #444;"></div>
<div style="left:957px;top:586px;width:16px;height:15px;background:#fff;border:1px solid #000;"></div>
<div style="left:972px;top:72px;width:15px;height:514px;background:#e9e9e9;"></div>
<div style="left:973px;top:73px;width:13px;height:479px;background:linear-gradient(90deg,#d9d9d9,#f4f4f4 35%,#fdfdfd 60%,#e9e9e9);border-radius:7px;box-shadow:inset 0 0 1px #999;"></div>
<div style="left:973px;top:304px;width:13px;height:22px;background:linear-gradient(90deg,#4f8fe0,#9cc8f5 30%,#5a9ae8 55%,#3f80da 80%,#6aa8ee);border:1px solid #3a66b0;border-radius:6px;"></div>
<div style="left:972px;top:552px;width:15px;height:17px;background:linear-gradient(90deg,#e4e4e4,#fbfbfb 50%,#e6e6e6);border-top:1px solid #c4c4c4;"></div>
<div style="left:972px;top:569px;width:15px;height:17px;background:linear-gradient(90deg,#e4e4e4,#fbfbfb 50%,#e6e6e6);border-top:1px solid #c4c4c4;"></div>
<div style="left:976px;top:558px;width:0px;height:0px;border:3.5px solid transparent;border-top:0;border-bottom:5px solid #444;"></div>
<div style="left:976px;top:575px;width:0px;height:0px;border:3.5px solid transparent;border-bottom:0;border-top:5px solid #444;"></div>
<div style="left:972px;top:586px;width:15px;height:15px;background:#fff;border:1px solid #000;"></div>
<div style="left:428px;top:586px;width:529px;height:14px;background:#ededed;"></div>
<div style="left:429px;top:586px;width:495px;height:14px;background:linear-gradient(#d9d9d9,#f4f4f4 35%,#fdfdfd 60%,#e9e9e9);border-radius:7px;box-shadow:inset 0 0 1px #999;"></div>
<div style="left:669px;top:586px;width:21px;height:14px;background:linear-gradient(#cfe4fb,#8fbff2 30%,#4d94e6 52%,#6db2f4 75%,#b9e0fd);border:1px solid #3a66b0;border-radius:6px;"></div>
<div style="left:923px;top:586px;width:16px;height:14px;background:linear-gradient(#e4e4e4,#fbfbfb 50%,#e6e6e6);border-left:1px solid #c4c4c4;"></div>
<div style="left:939px;top:586px;width:18px;height:14px;background:linear-gradient(#e4e4e4,#fbfbfb 50%,#e6e6e6);border-left:1px solid #c4c4c4;"></div>
<div style="left:929px;top:590px;width:0px;height:0px;border:3.5px solid transparent;border-left:0;border-right:5px solid #444;"></div>
<div style="left:946px;top:590px;width:0px;height:0px;border:3.5px solid transparent;border-right:0;border-left:5px solid #444;"></div>
<span class="t b" style="left:430px;top:600px;font-size:10.5px;">WILDTYPE&nbsp; 4580 FEs, Bio-A 200. Step 191 of 40 (12.13 sec, 2.65 ms/FE, 362 iters), 100.000 s.</span>
<span class="t b" style="left:430px;top:611px;font-size:10.5px;">Growth: area 1.65 (+0.4%), linear 1.28 (+0.2%). Strain max 0.40% average 0.00%. Av. strain retention 0%.</span>
<span class="t r" style="left:990px;top:89px;width:64px;">az:-45.00</span>
<span class="t r" style="left:990px;top:106px;width:64px;">el:33.75</span>
<span class="t r" style="left:990px;top:123px;width:64px;">ro:0.00</span>
 </div>
</div>
</body></html>
